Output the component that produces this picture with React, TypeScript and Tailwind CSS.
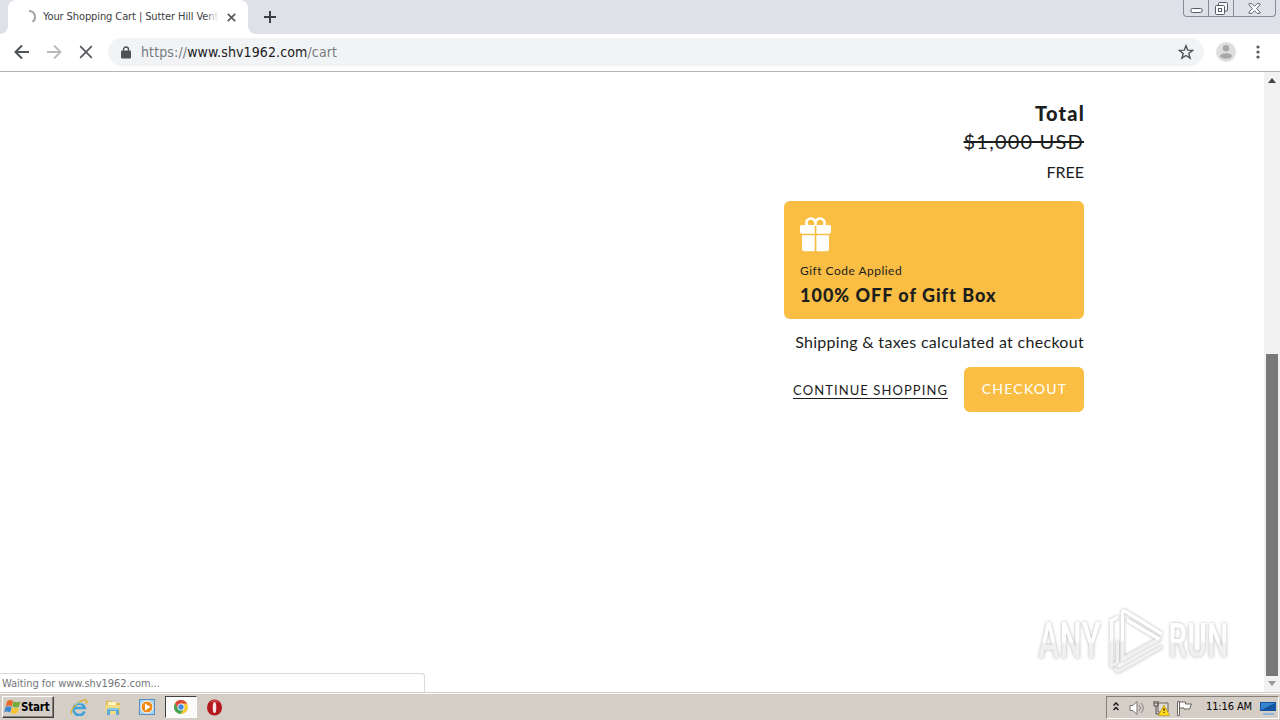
import type { ReactNode } from "react";

const uiFont = "font-['DejaVu_Sans_Condensed','DejaVu_Sans',sans-serif] [font-stretch:condensed]";

function Icon({ className, box, children }: { className: string; box: string; children: ReactNode }) {
  return (
    <svg className={`shrink-0 ${className}`} viewBox={box} fill="none">
      {children}
    </svg>
  );
}

function WindowControls() {
  return (
    <div className="ml-auto mr-[4px] flex h-[17px] w-[93px] overflow-hidden rounded-b-[4px] border border-t-0 border-[#858b99]">
      <div className="flex w-[25px] justify-center border-r border-[#858b99]">
        <Icon className="mt-[7px] h-[7px] w-[13px]" box="0 0 13 7">
          <rect x="1" y="1.5" width="11" height="4" rx="1.3" fill="#fff" stroke="#555a66" />
        </Icon>
      </div>
      <div className="flex w-[25px] justify-center border-r border-[#858b99]">
        <Icon className="mt-[2px] h-[13px] w-[13px]" box="0 0 13 13">
          <rect x="3.5" y=".5" width="9" height="8.5" rx="1" fill="#f6f7f9" stroke="#555a66" />
          <rect x=".5" y="3.5" width="9" height="9" rx="1" fill="#fff" stroke="#555a66" />
          <rect x="3.5" y="6.5" width="3" height="3" stroke="#555a66" />
        </Icon>
      </div>
      <div className="flex flex-1 justify-center">
        <Icon className="mt-[3px] h-[11px] w-[13px]" box="0 0 13 11">
          <path d="M1 .7h3l2.5 2.6L9 .7h3v1.2L8.6 5.5 12 9.1v1.2H9L6.5 7.7 4 10.3H1V9.1L4.4 5.5 1 1.9z" fill="#fff" stroke="#555a66" strokeWidth=".9" />
        </Icon>
      </div>
    </div>
  );
}

function TabStrip() {
  return (
    <div className="flex h-[34px] bg-[#dee1e8]">
      <div className="w-[8px] bg-white">
        <div className="h-full rounded-br-[8px] bg-[#dee1e8]" />
      </div>
      <div className="flex bg-[#dee1e8]">
        <div className="flex h-[34px] w-[240px] items-center rounded-t-[8px] bg-white">
          <Icon className="ml-[14px] h-[14px] w-[14px]" box="0 0 14 14">
            <path d="M7 1a6 6 0 0 1 3.5 10.9" stroke="#a3a5a9" strokeWidth="2" />
          </Icon>
          <div className="relative ml-[7px] w-[176px] overflow-hidden whitespace-nowrap text-[11px] tracking-[-0.1px] text-[#3c4043]">
            Your Shopping Cart | Sutter Hill Vent
            <div className="absolute inset-y-0 right-0 w-[14px] bg-linear-to-r from-transparent to-white" />
          </div>
          <Icon className="ml-[8px] h-[9px] w-[9px]" box="0 0 9 9">
            <path d="m.8.8 7.4 7.4m0-7.4L.8 8.2" stroke="#55585c" strokeWidth="1.7" />
          </Icon>
        </div>
      </div>
      <div className="w-[8px] bg-white">
        <div className="h-full rounded-bl-[8px] bg-[#dee1e8]" />
      </div>
      <Icon className="ml-[8px] mt-[11px] h-[12px] w-[12px]" box="0 0 12 12">
        <path d="M6 0v12M0 6h12" stroke="#3b3e43" strokeWidth="2" />
      </Icon>
      <WindowControls />
    </div>
  );
}

function Toolbar() {
  return (
    <div className="flex h-[38px] items-center border-b border-[#b1b3b5] bg-white pb-[1px]">
      <Icon className="ml-[14px] h-[16px] w-[16px]" box="0 0 16 16">
        <path d="M15 8H2M8 1.5 1.5 8 8 14.5" stroke="#4f5256" strokeWidth="2" />
      </Icon>
      <Icon className="ml-[16px] h-[16px] w-[16px]" box="0 0 16 16">
        <path d="M1 8h13M8 1.5 14.5 8 8 14.5" stroke="#b8babc" strokeWidth="1.9" />
      </Icon>
      <Icon className="ml-[17px] h-[14px] w-[14px]" box="0 0 14 14">
        <path d="m1.2 1.2 11.6 11.6m0-11.6L1.2 12.8" stroke="#55585c" strokeWidth="1.7" />
      </Icon>
      <div className="ml-[15px] flex h-[28px] w-[1096px] items-center rounded-full bg-[#f1f3f4]">
        <Icon className="ml-[13px] h-[13px] w-[10px]" box="0 0 10 13">
          <rect y="4.5" width="10" height="8" rx="1" fill="#4e5155" />
          <path d="M2.5 5V3.5a2.5 2.5 0 0 1 5 0V5" stroke="#4e5155" strokeWidth="1.4" />
        </Icon>
        <div className="ml-[10px] whitespace-nowrap text-[14px] tracking-[0.12px] text-[#777b80]">
          https://<span className="text-[#202124]">www.shv1962.com</span>/cart
        </div>
        <Icon className="ml-auto mr-[10px] h-[16px] w-[16px]" box="0 0 16 16">
          <path d="m8 1.7 1.7 4.4 4.9.3-3.8 3 1.3 4.7L8 11.5l-4.1 2.6 1.3-4.7-3.8-3 4.9-.3z" stroke="#505459" strokeWidth="1.4" />
        </Icon>
      </div>
      <Icon className="ml-[12px] h-[20px] w-[20px]" box="0 0 20 20">
        <circle cx="10" cy="10" r="10" fill="#dedede" />
        <circle cx="10" cy="6.3" r="3.2" fill="#a8a8a8" />
        <ellipse cx="10" cy="14" rx="6" ry="2.8" fill="#a8a8a8" />
      </Icon>
      <Icon className="ml-[20px] h-[14px] w-[4px]" box="0 0 4 14">
        <circle cx="2" cy="2" r="1.6" fill="#55585c" />
        <circle cx="2" cy="7" r="1.6" fill="#55585c" />
        <circle cx="2" cy="12" r="1.6" fill="#55585c" />
      </Icon>
    </div>
  );
}

function CartSummary() {
  return (
    <div className="ml-[784px] mt-[29px] flex w-[300px] flex-col whitespace-nowrap font-[Lato,sans-serif] text-[#1c1d1d]">
      <div className="mr-[-1px] self-end text-[20px] font-black leading-[24px] tracking-[1.2px]">Total</div>
      <div className="mt-[4px] self-end text-[20px] leading-[24px] tracking-[1.2px] line-through decoration-2">$1,000 USD</div>
      <div className="mt-[7px] self-end text-[16px] leading-[24px]">FREE</div>
      <div className="mt-[17px] flex h-[118px] flex-col rounded-[6px] bg-[#f9be43] px-[16px] pt-[15px]">
        <Icon className="h-[36px] w-[31px]" box="0 0 31 36">
          <path d="M15.5 9.5V6.3a4.6 4.2 0 1 0-8 3.2M15.5 9.5V6.3a4.6 4.2 0 1 1 8 3.2" stroke="#fff" strokeWidth="2.6" />
          <path d="M1.5 9h13.2v8.8H2A2 2 0 0 1 0 15.8V10.5A1.5 1.5 0 0 1 1.5 9zm14.9 0h13.1a1.5 1.5 0 0 1 1.5 1.5v5.3a2 2 0 0 1-2 2H16.4zM2 19.2h12.7v16H4.5A2.5 2.5 0 0 1 2 32.7zm14.4 0H29v13.5a2.5 2.5 0 0 1-2.5 2.5H16.4z" fill="#fff" />
        </Icon>
        <div className="mt-[11px] text-[12px] leading-[16px] tracking-[0.48px]">Gift Code Applied</div>
        <div className="mt-[4px] text-[18px] font-black leading-[24px] tracking-[1px]">100% OFF of Gift Box</div>
      </div>
      <div className="mt-[11px] self-end text-[16px] leading-[24px] tracking-[0.3px]">Shipping &amp; taxes calculated at checkout</div>
      <div className="mt-[13px] flex items-center justify-end gap-[16px]">
        <a className="mt-[2px] h-[17px] border-b border-[#1c1d1d] text-[13px] leading-[16px] tracking-[1.08px]">CONTINUE SHOPPING</a>
        <button className="h-[45px] w-[120px] rounded-[6px] bg-[#f9be43] pb-[2px] pl-[1px] text-[14px] tracking-[1.25px] text-white">CHECKOUT</button>
      </div>
    </div>
  );
}

function Scrollbar() {
  return (
    <div className="ml-auto flex w-[16px] flex-col items-center bg-[#f1f1f1]">
      <Icon className="mt-[6px] h-[5px] w-[8px]" box="0 0 8 5">
        <path d="m0 5 4-5 4 5z" fill="#444" />
      </Icon>
      <div className="mt-[271px] h-[322px] w-[12px] bg-[#787878]" />
      <Icon className="mt-[5px] h-[5px] w-[8px]" box="0 0 8 5">
        <path d="m0 0 4 5 4-5z" fill="#999" />
      </Icon>
    </div>
  );
}

function Watermark() {
  return (
    <div className="absolute left-[1038px] top-[608px] flex h-[66px] w-[200px] items-center font-['Roboto',sans-serif] text-[50px] font-medium leading-[60px] [filter:drop-shadow(0_0_1.5px_#b0b0b0)]">
      <div className="w-[69px] whitespace-nowrap">
        <div className="w-fit origin-left scale-x-[0.730] bg-linear-to-b from-white from-50% to-[#f0f0f0] to-55% bg-clip-text text-transparent">ANY</div>
      </div>
      <Icon className="h-[64px] w-[58px]" box="0 0 58 64">
        <path d="M11 8 4.500 11.500V56" stroke="#fff" strokeWidth="3.500" />
        <path d="M4.500 32v25l6-3.500V32" stroke="#f0f0f0" strokeWidth="3" />
        <path d="M8 59q1 4 5 2.500l42-24" stroke="#f0f0f0" strokeWidth="3.500" />
        <path d="M16 50 54 29" stroke="#f0f0f0" strokeWidth="4" />
        <path d="M15.500 50V4q0-3 3-1.500L55 25M20 11l32 19" stroke="#fff" strokeWidth="3.500" strokeLinejoin="round" />
        <path d="M15.500 32v19l4-2" stroke="#f0f0f0" strokeWidth="3.500" />
      </Icon>
      <div className="ml-[3px] w-[68px] whitespace-nowrap">
        <div className="w-fit origin-left scale-x-[0.740] bg-linear-to-b from-white from-50% to-[#f0f0f0] to-55% bg-clip-text text-[48px] tracking-[-0.5px] text-transparent">RUN</div>
      </div>
    </div>
  );
}

function StartFlag() {
  return (
    <Icon className="h-[16px] w-[17px]" box="0 0 16 15">
      <path d="M3 2q3-2 5.500 0L7.300 7Q4.500 5 1.500 7z" fill="#e96a26" />
      <path d="M9 2q3 2 6.500 0l-1.300 5q-3 2-6.400 0z" fill="#72ad3b" />
      <path d="M1.300 7.700q3-2 5.800 0l-1.300 5q-3-2-5.600 0z" fill="#3e86ce" />
      <path d="M7.600 7.900q3 2 6.400 0l-1.300 5q-3 2-6.400 0z" fill="#f6c52d" />
    </Icon>
  );
}

function Taskbar() {
  return (
    <div className="flex h-[28px] items-start border-t border-[#d4d0c8] bg-[#d5cec7] shadow-[inset_0_1px_0_#fff]">
      <div className="ml-[2px] mt-[3px] flex h-[22px] w-[52px] items-center whitespace-nowrap border border-b-[#404040] border-l-white border-r-[#404040] border-t-white pl-[1px] shadow-[inset_-1px_-1px_0_#858078]">
        <StartFlag />
        <span className="pt-[1px] text-[11.5px] font-bold tracking-[-0.2px] text-black">Start</span>
      </div>
      <Icon className="ml-[16px] mt-[6px] h-[17px] w-[18px]" box="0 0 18 17">
        <path d="M14.500 12.500A5.700 5.700 0 1 1 14.700 9H5" stroke="#3fa2dc" strokeWidth="2.600" />
        <path d="M2 15C-1 12 8 1 15 1q3 0 1 4" stroke="#e5b22e" strokeWidth="1.400" />
        <path d="M5 6q3-4 7-1" stroke="#8ed1f2" />
      </Icon>
      <Icon className="ml-[16px] mt-[6px] h-[17px] w-[18px]" box="0 0 18 17">
        <path d="M2 2h6l1 2h7v11H2z" fill="#e2bd55" />
        <path d="M4 3h8v3H4z" fill="#fff5bf" />
        <path d="M1 6h15l-1 9H2z" fill="#f3db83" />
        <path d="M3 16v-5q0-2 2-2h8q2 0 2 2v5h-3v-4H6v4z" fill="#58abd8" />
        <path d="M4 10h10" stroke="#b9e2f5" />
      </Icon>
      <Icon className="ml-[17px] mt-[6px] h-[16px] w-[16px]" box="0 0 16 16">
        <rect x=".5" y=".5" width="15" height="15" fill="#a9d1f0" stroke="#568fbd" />
        <circle cx="8" cy="8" r="6" fill="#f48b17" stroke="#fff" />
        <path d="m6 4.500 5.500 3.500L6 11.500z" fill="#fff" />
      </Icon>
      <div className="ml-[10px] mt-[3px] flex h-[22px] w-[32px] items-center justify-center border border-b-white border-l-[#404040] border-r-white border-t-[#404040] bg-[#fbfafa]">
        <Icon className="h-[14px] w-[14px]" box="0 0 14 14">
          <circle cx="7" cy="7" r="7" fill="#f5c934" />
          <path d="M1 3.400A7 7 0 0 1 13.100 3.500H7L4 8.500z" fill="#dc493b" />
          <path d="M1 3.400A7 7 0 0 0 6.500 14L10 8.500H4z" fill="#45a456" />
          <circle cx="7" cy="7" r="3.500" fill="#fff" />
          <circle cx="7" cy="7" r="2.700" fill="#4687df" />
        </Icon>
      </div>
      <Icon className="ml-[9px] mt-[6px] h-[17px] w-[17px]" box="0 0 16 17">
        <ellipse cx="8" cy="8.500" rx="7.500" ry="8" fill="#b3191c" />
        <ellipse cx="8" cy="8.500" rx="1.800" ry="5.500" fill="#f8e6e6" />
        <path d="M4 3q4-3 8 0" stroke="#e15b56" />
      </Icon>
      <div className="ml-auto mr-[1px] mt-[3px] flex h-[23px] w-[173px] items-center border border-b-white border-l-[#858078] border-r-white border-t-[#858078]">
        <Icon className="mb-[2px] ml-[6px] h-[9px] w-[6px]" box="0 0 6 9">
          <path d="m.5 3.500 2.500-2.500 2.500 2.500M.5 8 3 5.500 5.500 8" stroke="#111" strokeWidth="1.400" />
        </Icon>
        <Icon className="ml-[10px] h-[16px] w-[17px]" box="0 0 17 16">
          <path d="M1 5.500h3l4-4v13l-4-4H1z" fill="#fff" stroke="#77746f" />
          <path d="M10 5q3 3 0 6M12 3q4.500 5 0 10" stroke="#85817c" />
        </Icon>
        <Icon className="ml-[7px] h-[16px] w-[17px]" box="0 0 17 16">
          <path d="M5 3h10v9H5z" fill="#dedbd4" stroke="#68655f" />
          <path d="M1 1v5h4V1M3 6v8h4M2 1v3m2-3v3" stroke="#55524d" />
          <path d="m11 5 5.500 10.500h-11z" fill="#ffdc19" stroke="#b98900" strokeWidth=".6" />
          <path d="M11 8v3m0 1v1" stroke="#443500" strokeWidth="1.300" />
        </Icon>
        <Icon className="ml-[6px] h-[16px] w-[17px]" box="0 0 17 16">
          <path d="M1.500 1.500h2v14h-2z" fill="#fff" stroke="#696660" />
          <path d="M3.500 2h6v2h6l-2 5H8V8H3.500z" fill="#fff" stroke="#696660" />
        </Icon>
        <span className="ml-[13px] w-[48px] whitespace-nowrap text-[11px] tracking-[-0.12px] text-black">11:16 AM</span>
        <Icon className="ml-[6px] h-[14px] w-[16px]" box="0 0 16 14">
          <path d="M0 1h16v9H0z" fill="#1554a1" />
          <path d="M1 2h14L1 9z" fill="#3686cf" />
          <path d="M3 12h11v2H3z" fill="#8db7dc" />
        </Icon>
      </div>
    </div>
  );
}

export default function App() {
  return (
    <div className={`relative flex h-[720px] w-[1280px] flex-col overflow-hidden bg-white ${uiFont}`}>
      <TabStrip />
      <Toolbar />
      <div className="relative flex h-[620px]">
        <CartSummary />
        <Scrollbar />
        <div className="absolute bottom-0 left-0 h-[19px] w-[425px] whitespace-nowrap rounded-tr-[3px] border-r border-t border-[#dadada] bg-white pl-[2px] text-[11px] leading-[19px] tracking-[-0.06px] text-[#73767a]">
          Waiting for www.shv1962.com...
        </div>
      </div>
      <Taskbar />
      <Watermark />
    </div>
  );
}
